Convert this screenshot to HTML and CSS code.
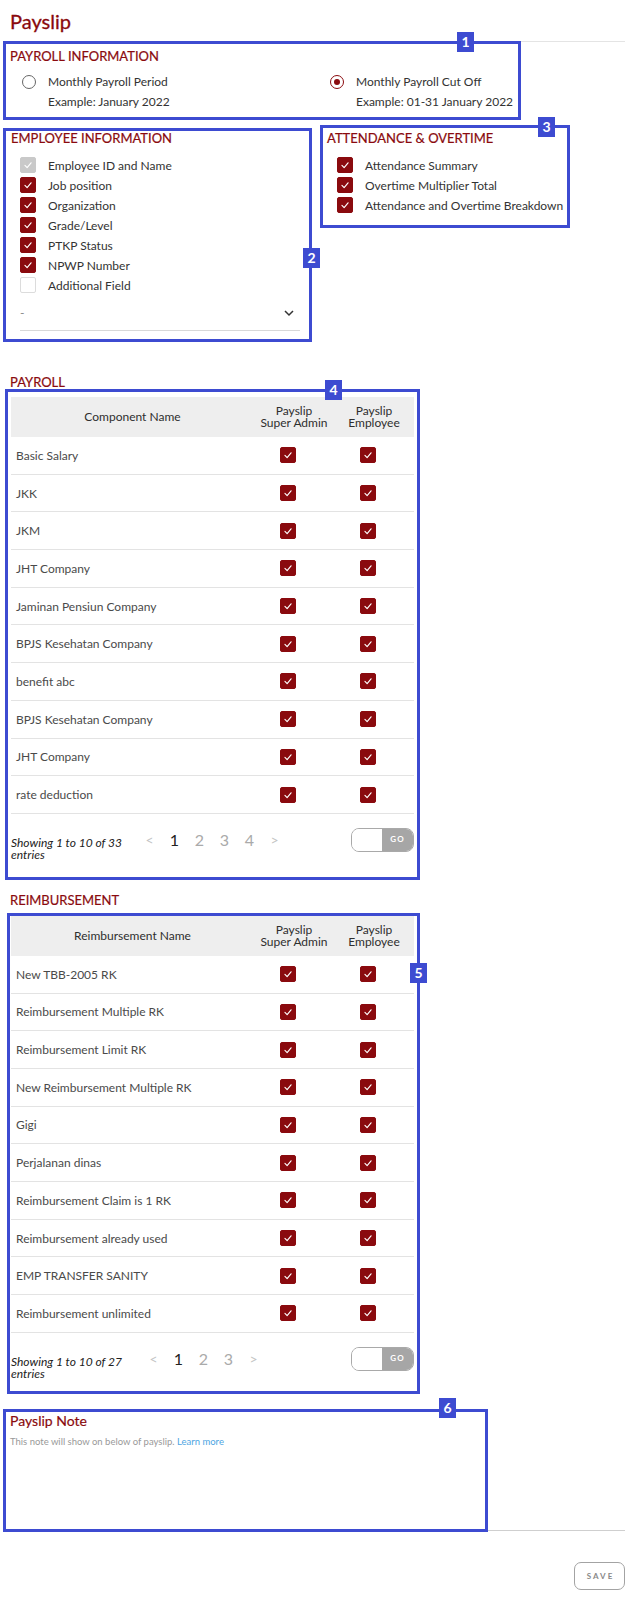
FILE: index.html
```html
<!DOCTYPE html>
<html lang="en">
<head>
    <meta charset="UTF-8">
    <meta name="viewport" content="width=device-width, initial-scale=1.0">
    <title>Payslip</title>
    <link rel="stylesheet" href="styles.css">
</head>
<body>
<div class="page">
    <header class="page-head">
        <h1 class="page-title">Payslip</h1>
    </header>

    <!-- payroll information -->
    <section class="mark mark-info">
        <span class="badge badge-1">1</span>
        <h2 class="sec-title">PAYROLL INFORMATION</h2>
        <div class="radio-grid">
            <div class="radio-opt">
                <span class="radio"></span>
                <div class="radio-text">
                    <div>Monthly Payroll Period</div>
                    <div>Example: January 2022</div>
                </div>
            </div>
            <div class="radio-opt">
                <span class="radio checked"></span>
                <div class="radio-text">
                    <div>Monthly Payroll Cut Off</div>
                    <div>Example: 01-31 January 2022</div>
                </div>
            </div>
        </div>
    </section>

    <div class="info-row">
        <section class="mark mark-employee">
            <span class="badge badge-2">2</span>
            <h2 class="sec-title">EMPLOYEE INFORMATION</h2>
            <ul class="check-list">
                <li><span class="cb disabled"><svg viewBox="0 0 16 16"><polyline points="4.5,8.5 7,11 11.5,5.5"/></svg></span>Employee ID and Name</li>
                <li><span class="cb on"><svg viewBox="0 0 16 16"><polyline points="4.5,8.5 7,11 11.5,5.5"/></svg></span>Job position</li>
                <li><span class="cb on"><svg viewBox="0 0 16 16"><polyline points="4.5,8.5 7,11 11.5,5.5"/></svg></span>Organization</li>
                <li><span class="cb on"><svg viewBox="0 0 16 16"><polyline points="4.5,8.5 7,11 11.5,5.5"/></svg></span>Grade/Level</li>
                <li><span class="cb on"><svg viewBox="0 0 16 16"><polyline points="4.5,8.5 7,11 11.5,5.5"/></svg></span>PTKP Status</li>
                <li><span class="cb on"><svg viewBox="0 0 16 16"><polyline points="4.5,8.5 7,11 11.5,5.5"/></svg></span>NPWP Number</li>
                <li><span class="cb"></span>Additional Field</li>
            </ul>
            <div class="select-line">
                <span>-</span>
                <svg class="chevron" viewBox="0 0 12 12"><polyline points="2,4 6,8 10,4"/></svg>
            </div>
        </section>

        <section class="mark mark-attendance">
            <span class="badge badge-3">3</span>
            <h2 class="sec-title">ATTENDANCE &amp; OVERTIME</h2>
            <ul class="check-list">
                <li><span class="cb on"><svg viewBox="0 0 16 16"><polyline points="4.5,8.5 7,11 11.5,5.5"/></svg></span>Attendance Summary</li>
                <li><span class="cb on"><svg viewBox="0 0 16 16"><polyline points="4.5,8.5 7,11 11.5,5.5"/></svg></span>Overtime Multiplier Total</li>
                <li><span class="cb on"><svg viewBox="0 0 16 16"><polyline points="4.5,8.5 7,11 11.5,5.5"/></svg></span>Attendance and Overtime Breakdown</li>
            </ul>
        </section>
    </div>

    <!-- payroll components -->
    <h2 class="sec-title block-title payroll-title">PAYROLL</h2>
    <section class="mark mark-payroll">
        <span class="badge badge-4">4</span>
        <div class="grid-table">
            <div class="grid-head">
                <div>Component Name</div>
                <div>Payslip<br>Super Admin</div>
                <div>Payslip<br>Employee</div>
            </div>
            <div class="grid-row"><div>Basic Salary</div><div><span class="cb on"><svg viewBox="0 0 16 16"><polyline points="4.5,8.5 7,11 11.5,5.5"/></svg></span></div><div><span class="cb on"><svg viewBox="0 0 16 16"><polyline points="4.5,8.5 7,11 11.5,5.5"/></svg></span></div></div>
            <div class="grid-row"><div>JKK</div><div><span class="cb on"><svg viewBox="0 0 16 16"><polyline points="4.5,8.5 7,11 11.5,5.5"/></svg></span></div><div><span class="cb on"><svg viewBox="0 0 16 16"><polyline points="4.5,8.5 7,11 11.5,5.5"/></svg></span></div></div>
            <div class="grid-row"><div>JKM</div><div><span class="cb on"><svg viewBox="0 0 16 16"><polyline points="4.5,8.5 7,11 11.5,5.5"/></svg></span></div><div><span class="cb on"><svg viewBox="0 0 16 16"><polyline points="4.5,8.5 7,11 11.5,5.5"/></svg></span></div></div>
            <div class="grid-row"><div>JHT Company</div><div><span class="cb on"><svg viewBox="0 0 16 16"><polyline points="4.5,8.5 7,11 11.5,5.5"/></svg></span></div><div><span class="cb on"><svg viewBox="0 0 16 16"><polyline points="4.5,8.5 7,11 11.5,5.5"/></svg></span></div></div>
            <div class="grid-row"><div>Jaminan Pensiun Company</div><div><span class="cb on"><svg viewBox="0 0 16 16"><polyline points="4.5,8.5 7,11 11.5,5.5"/></svg></span></div><div><span class="cb on"><svg viewBox="0 0 16 16"><polyline points="4.5,8.5 7,11 11.5,5.5"/></svg></span></div></div>
            <div class="grid-row"><div>BPJS Kesehatan Company</div><div><span class="cb on"><svg viewBox="0 0 16 16"><polyline points="4.5,8.5 7,11 11.5,5.5"/></svg></span></div><div><span class="cb on"><svg viewBox="0 0 16 16"><polyline points="4.5,8.5 7,11 11.5,5.5"/></svg></span></div></div>
            <div class="grid-row"><div>benefit abc</div><div><span class="cb on"><svg viewBox="0 0 16 16"><polyline points="4.5,8.5 7,11 11.5,5.5"/></svg></span></div><div><span class="cb on"><svg viewBox="0 0 16 16"><polyline points="4.5,8.5 7,11 11.5,5.5"/></svg></span></div></div>
            <div class="grid-row"><div>BPJS Kesehatan Company</div><div><span class="cb on"><svg viewBox="0 0 16 16"><polyline points="4.5,8.5 7,11 11.5,5.5"/></svg></span></div><div><span class="cb on"><svg viewBox="0 0 16 16"><polyline points="4.5,8.5 7,11 11.5,5.5"/></svg></span></div></div>
            <div class="grid-row"><div>JHT Company</div><div><span class="cb on"><svg viewBox="0 0 16 16"><polyline points="4.5,8.5 7,11 11.5,5.5"/></svg></span></div><div><span class="cb on"><svg viewBox="0 0 16 16"><polyline points="4.5,8.5 7,11 11.5,5.5"/></svg></span></div></div>
            <div class="grid-row"><div>rate deduction</div><div><span class="cb on"><svg viewBox="0 0 16 16"><polyline points="4.5,8.5 7,11 11.5,5.5"/></svg></span></div><div><span class="cb on"><svg viewBox="0 0 16 16"><polyline points="4.5,8.5 7,11 11.5,5.5"/></svg></span></div></div>
            <div class="grid-foot">
                <div class="showing">Showing 1 to 10 of 33 entries</div>
                <div class="pager">
                    <span class="arrow">&lt;</span>
                    <span class="current">1</span>
                    <span>2</span>
                    <span>3</span>
                    <span>4</span>
                    <span class="arrow">&gt;</span>
                </div>
                <div class="go-box"><span class="go-input"></span><span class="go-btn">GO</span></div>
            </div>
        </div>
    </section>

    <!-- reimbursement -->
    <h2 class="sec-title block-title reimb-title">REIMBURSEMENT</h2>
    <section class="mark mark-reimb">
        <span class="badge badge-5">5</span>
        <div class="grid-table">
            <div class="grid-head">
                <div>Reimbursement Name</div>
                <div>Payslip<br>Super Admin</div>
                <div>Payslip<br>Employee</div>
            </div>
            <div class="grid-row"><div>New TBB-2005 RK</div><div><span class="cb on"><svg viewBox="0 0 16 16"><polyline points="4.5,8.5 7,11 11.5,5.5"/></svg></span></div><div><span class="cb on"><svg viewBox="0 0 16 16"><polyline points="4.5,8.5 7,11 11.5,5.5"/></svg></span></div></div>
            <div class="grid-row"><div>Reimbursement Multiple RK</div><div><span class="cb on"><svg viewBox="0 0 16 16"><polyline points="4.5,8.5 7,11 11.5,5.5"/></svg></span></div><div><span class="cb on"><svg viewBox="0 0 16 16"><polyline points="4.5,8.5 7,11 11.5,5.5"/></svg></span></div></div>
            <div class="grid-row"><div>Reimbursement Limit RK</div><div><span class="cb on"><svg viewBox="0 0 16 16"><polyline points="4.5,8.5 7,11 11.5,5.5"/></svg></span></div><div><span class="cb on"><svg viewBox="0 0 16 16"><polyline points="4.5,8.5 7,11 11.5,5.5"/></svg></span></div></div>
            <div class="grid-row"><div>New Reimbursement Multiple RK</div><div><span class="cb on"><svg viewBox="0 0 16 16"><polyline points="4.5,8.5 7,11 11.5,5.5"/></svg></span></div><div><span class="cb on"><svg viewBox="0 0 16 16"><polyline points="4.5,8.5 7,11 11.5,5.5"/></svg></span></div></div>
            <div class="grid-row"><div>Gigi</div><div><span class="cb on"><svg viewBox="0 0 16 16"><polyline points="4.5,8.5 7,11 11.5,5.5"/></svg></span></div><div><span class="cb on"><svg viewBox="0 0 16 16"><polyline points="4.5,8.5 7,11 11.5,5.5"/></svg></span></div></div>
            <div class="grid-row"><div>Perjalanan dinas</div><div><span class="cb on"><svg viewBox="0 0 16 16"><polyline points="4.5,8.5 7,11 11.5,5.5"/></svg></span></div><div><span class="cb on"><svg viewBox="0 0 16 16"><polyline points="4.5,8.5 7,11 11.5,5.5"/></svg></span></div></div>
            <div class="grid-row"><div>Reimbursement Claim is 1 RK</div><div><span class="cb on"><svg viewBox="0 0 16 16"><polyline points="4.5,8.5 7,11 11.5,5.5"/></svg></span></div><div><span class="cb on"><svg viewBox="0 0 16 16"><polyline points="4.5,8.5 7,11 11.5,5.5"/></svg></span></div></div>
            <div class="grid-row"><div>Reimbursement already used</div><div><span class="cb on"><svg viewBox="0 0 16 16"><polyline points="4.5,8.5 7,11 11.5,5.5"/></svg></span></div><div><span class="cb on"><svg viewBox="0 0 16 16"><polyline points="4.5,8.5 7,11 11.5,5.5"/></svg></span></div></div>
            <div class="grid-row"><div>EMP TRANSFER SANITY</div><div><span class="cb on"><svg viewBox="0 0 16 16"><polyline points="4.5,8.5 7,11 11.5,5.5"/></svg></span></div><div><span class="cb on"><svg viewBox="0 0 16 16"><polyline points="4.5,8.5 7,11 11.5,5.5"/></svg></span></div></div>
            <div class="grid-row"><div>Reimbursement unlimited</div><div><span class="cb on"><svg viewBox="0 0 16 16"><polyline points="4.5,8.5 7,11 11.5,5.5"/></svg></span></div><div><span class="cb on"><svg viewBox="0 0 16 16"><polyline points="4.5,8.5 7,11 11.5,5.5"/></svg></span></div></div>
            <div class="grid-foot">
                <div class="showing">Showing 1 to 10 of 27 entries</div>
                <div class="pager pager-short">
                    <span class="arrow">&lt;</span>
                    <span class="current">1</span>
                    <span>2</span>
                    <span>3</span>
                    <span class="arrow">&gt;</span>
                </div>
                <div class="go-box"><span class="go-input"></span><span class="go-btn">GO</span></div>
            </div>
        </div>
    </section>

    <!-- note -->
    <div class="note-area">
        <section class="mark mark-note">
            <span class="badge badge-6">6</span>
            <h2 class="note-title">Payslip Note</h2>
            <p class="note-desc">This note will show on below of payslip. <a href="#">Learn more</a></p>
        </section>
    </div>

    <div class="actions">
        <button type="button" class="save-btn">SAVE</button>
    </div>
</div>
</body>
</html>
```

FILE: styles.css
```css
body {
    margin: 0;
    font-family: 'Lato', 'Open Sans', sans-serif;
    color: #333;
    background: #fff;
}
.page {
    padding: 0 16px 10px 3px;
}
.page-head {
    height: 41px;
    border-bottom: 1px solid #e4e4e4;
}
.page-title {
    margin: 0;
    padding: 9px 0 0 7px;
    font-size: 20px;
    line-height: 24px;
    font-weight: 400;
    color: #8a0a0e;
    -webkit-text-stroke: 0.3px #8a0a0e;
}

/* annotation frames */
.mark {
    position: relative;
    border: 3px solid #3d4bd1;
    box-sizing: border-box;
}
.badge {
    position: absolute;
    width: 17px;
    height: 20px;
    background: #3d4bd1;
    color: #fff;
    font-size: 14px;
    font-weight: 700;
    line-height: 20px;
    text-align: center;
}
.badge-1 { left: 451px; top: -12px; }
.badge-2 { right: -11px; top: 117px; }
.badge-3 { left: 215px; top: -11px; }
.badge-4 { left: 317px; top: -12px; }
.badge-5 { right: -10px; top: 47px; }
.badge-6 { left: 433px; top: -14px; }

.sec-title {
    margin: 0;
    font-size: 13px;
    line-height: 15px;
    font-weight: 400;
    color: #8a0a0e;
    -webkit-text-stroke: 0.2px #8a0a0e;
}

/* payroll information */
.mark-info {
    width: 518px;
    margin-top: -1px;
    padding: 4px 0 5px 4px;
}
.mark-info .sec-title {
    line-height: 16px;
}
.radio-grid {
    display: grid;
    grid-template-columns: 308px auto;
    margin-top: 8px;
    padding-left: 12px;
    font-size: 12px;
    line-height: 20px;
}
.radio-opt {
    display: flex;
    align-items: flex-start;
    gap: 12px;
}
.radio {
    width: 14px;
    height: 14px;
    margin-top: 3px;
    border: 1.5px solid #666;
    border-radius: 50%;
    box-sizing: border-box;
    display: flex;
    align-items: center;
    justify-content: center;
}
.radio.checked {
    border-color: #8a0a0e;
}
.radio.checked::after {
    content: "";
    width: 6px;
    height: 6px;
    border-radius: 50%;
    background: #8a0a0e;
}

/* employee + attendance */
.info-row {
    display: flex;
    align-items: flex-start;
}
.mark-employee {
    width: 309px;
    margin-top: 8px;
    padding: 0 9px 8px 5px;
}
.mark-attendance {
    width: 250px;
    margin-top: 5px;
    margin-left: 8px;
    padding: 3px 0 10px 4px;
}
.check-list {
    list-style: none;
    margin: 9px 0 0;
    padding: 0 0 0 9px;
    font-size: 12px;
}
.mark-attendance .check-list {
    padding-left: 10px;
}
.check-list li {
    display: flex;
    align-items: center;
    gap: 12px;
    height: 20px;
}
.cb {
    width: 16px;
    height: 16px;
    border: 1px solid #dcdcdc;
    border-radius: 2px;
    box-sizing: border-box;
    background: #fff;
    display: inline-flex;
    flex: none;
}
.cb svg {
    width: 100%;
    height: 100%;
    fill: none;
    stroke: #fff;
    stroke-width: 1.3;
    stroke-linecap: round;
    stroke-linejoin: round;
}
.cb.on {
    background: #8a0a0e;
    border-color: #8a0a0e;
}
.cb.disabled {
    background: #c9c9c9;
    border-color: #c9c9c9;
}
.select-line {
    display: flex;
    justify-content: space-between;
    align-items: flex-start;
    margin: 8px 0 0 9px;
    height: 27px;
    border-bottom: 1px solid #d8d8d8;
    color: #888;
    font-size: 12px;
    line-height: 20px;
}
.chevron {
    width: 12px;
    height: 12px;
    margin: 4px 5px 0 0;
    fill: none;
    stroke: #333;
    stroke-width: 1.5;
}

/* tables */
.block-title {
    height: 14px;
    line-height: 14px;
    padding-left: 7px;
}
.payroll-title {
    margin-top: 33px;
}
.reimb-title {
    margin-top: 13px;
    margin-bottom: 6px;
}
.mark-payroll {
    width: 415px;
    margin-left: 2px;
    padding: 5px 3px 0 3px;
}
.mark-reimb {
    width: 413px;
    margin-left: 4px;
    padding: 0 3px 0 1px;
}
.grid-head,
.grid-row {
    display: grid;
    grid-template-columns: 243px 80px 80px;
    align-items: center;
    box-sizing: border-box;
}
.grid-head {
    height: 40px;
    background: #eeeeee;
    font-size: 12px;
    line-height: 12px;
    color: #2e2e2e;
    text-align: center;
}
.grid-row {
    height: 37.7px;
    border-bottom: 1px solid #e3e3e3;
    font-size: 12px;
    color: #4a4a4a;
}
.grid-row > div:first-child {
    padding-left: 5px;
}
.grid-row > div + div {
    display: flex;
    justify-content: center;
    padding-right: 12px;
}
.grid-foot {
    display: flex;
    align-items: flex-start;
    height: 63px;
    padding-top: 14px;
    box-sizing: border-box;
}
.mark-reimb .grid-foot {
    height: 58px;
}
.showing {
    width: 126px;
    margin-top: 9px;
    font-size: 12px;
    line-height: 12px;
    font-style: italic;
    color: #222;
}
.pager {
    display: flex;
    font-size: 16px;
    line-height: 24px;
    color: #aaa;
}
.pager-short {
    margin-left: 4px;
}
.pager span {
    width: 25px;
    text-align: center;
}
.pager .current {
    color: #222;
}
.pager .arrow {
    font-size: 14px;
    color: #c4c4c4;
}
.go-box {
    display: flex;
    margin-left: auto;
    width: 63px;
    height: 24px;
    border: 1.5px solid #a9a9a9;
    border-radius: 8px;
    box-sizing: border-box;
    overflow: hidden;
}
.go-input {
    flex: 1;
    background: #fff;
}
.go-btn {
    width: 31px;
    background: #a6a6a6;
    color: #fff;
    font-size: 8px;
    font-weight: 700;
    letter-spacing: 1px;
    line-height: 21px;
    text-align: center;
}

/* note */
.note-area {
    margin-top: 15px;
    border-bottom: 1px solid #cfcfcf;
}
.mark-note {
    width: 485px;
    height: 123px;
    margin-bottom: -2px;
    padding: 0 0 0 4px;
}
.note-title {
    margin: 0;
    font-size: 14px;
    line-height: 17px;
    font-weight: 400;
    color: #8a0a0e;
    -webkit-text-stroke: 0.2px #8a0a0e;
}
.note-desc {
    margin: 6px 0 0;
    font-size: 9.5px;
    line-height: 14px;
    color: #999;
}
.note-desc a {
    color: #4ea5e2;
    text-decoration: none;
}
.actions {
    display: flex;
    justify-content: flex-end;
    margin-top: 31px;
}
.save-btn {
    width: 51px;
    height: 28px;
    background: #fff;
    border: 1.5px solid #a3a3a3;
    border-radius: 7px;
    font-family: inherit;
    font-size: 8px;
    font-weight: 700;
    letter-spacing: 2px;
    color: #888;
    padding: 0 0 0 2px;
}
```
